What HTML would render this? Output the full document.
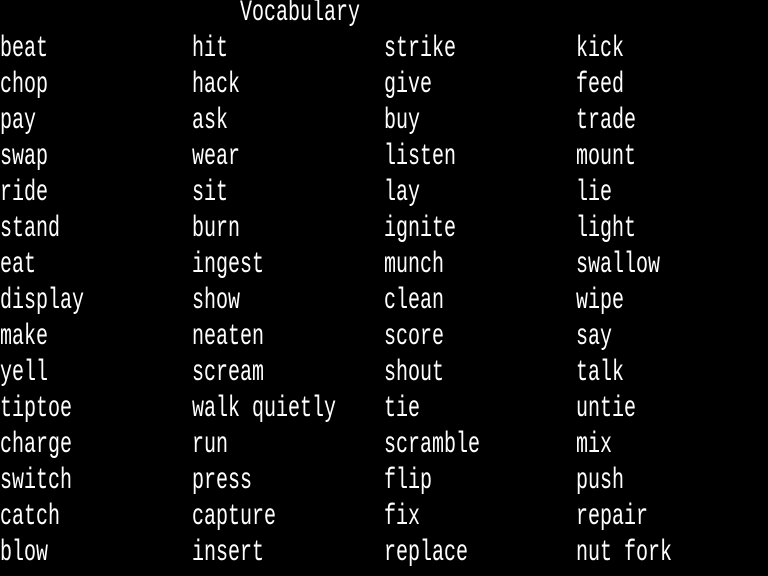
<!DOCTYPE html>
<html><head><style>
html,body{margin:0;padding:0;background:#000;width:768px;height:576px;overflow:hidden}
.w{position:absolute;color:#fff;font-family:"Liberation Mono",monospace;font-size:30px;line-height:36px;white-space:pre;transform:scaleX(0.6667);transform-origin:0 0;}
</style></head><body>
<div class="w" style="left:240px;top:-5px">Vocabulary</div>
<div id="c"></div>
<div class="w" style="left:0;top:31px">beat</div><div class="w" style="left:192px;top:31px">hit</div><div class="w" style="left:384px;top:31px">strike</div><div class="w" style="left:576px;top:31px">kick</div>
<div class="w" style="left:0;top:67px">chop</div><div class="w" style="left:192px;top:67px">hack</div><div class="w" style="left:384px;top:67px">give</div><div class="w" style="left:576px;top:67px">feed</div>
<div class="w" style="left:0;top:103px">pay</div><div class="w" style="left:192px;top:103px">ask</div><div class="w" style="left:384px;top:103px">buy</div><div class="w" style="left:576px;top:103px">trade</div>
<div class="w" style="left:0;top:139px">swap</div><div class="w" style="left:192px;top:139px">wear</div><div class="w" style="left:384px;top:139px">listen</div><div class="w" style="left:576px;top:139px">mount</div>
<div class="w" style="left:0;top:175px">ride</div><div class="w" style="left:192px;top:175px">sit</div><div class="w" style="left:384px;top:175px">lay</div><div class="w" style="left:576px;top:175px">lie</div>
<div class="w" style="left:0;top:211px">stand</div><div class="w" style="left:192px;top:211px">burn</div><div class="w" style="left:384px;top:211px">ignite</div><div class="w" style="left:576px;top:211px">light</div>
<div class="w" style="left:0;top:247px">eat</div><div class="w" style="left:192px;top:247px">ingest</div><div class="w" style="left:384px;top:247px">munch</div><div class="w" style="left:576px;top:247px">swallow</div>
<div class="w" style="left:0;top:283px">display</div><div class="w" style="left:192px;top:283px">show</div><div class="w" style="left:384px;top:283px">clean</div><div class="w" style="left:576px;top:283px">wipe</div>
<div class="w" style="left:0;top:319px">make</div><div class="w" style="left:192px;top:319px">neaten</div><div class="w" style="left:384px;top:319px">score</div><div class="w" style="left:576px;top:319px">say</div>
<div class="w" style="left:0;top:355px">yell</div><div class="w" style="left:192px;top:355px">scream</div><div class="w" style="left:384px;top:355px">shout</div><div class="w" style="left:576px;top:355px">talk</div>
<div class="w" style="left:0;top:391px">tiptoe</div><div class="w" style="left:192px;top:391px">walk quietly</div><div class="w" style="left:384px;top:391px">tie</div><div class="w" style="left:576px;top:391px">untie</div>
<div class="w" style="left:0;top:427px">charge</div><div class="w" style="left:192px;top:427px">run</div><div class="w" style="left:384px;top:427px">scramble</div><div class="w" style="left:576px;top:427px">mix</div>
<div class="w" style="left:0;top:463px">switch</div><div class="w" style="left:192px;top:463px">press</div><div class="w" style="left:384px;top:463px">flip</div><div class="w" style="left:576px;top:463px">push</div>
<div class="w" style="left:0;top:499px">catch</div><div class="w" style="left:192px;top:499px">capture</div><div class="w" style="left:384px;top:499px">fix</div><div class="w" style="left:576px;top:499px">repair</div>
<div class="w" style="left:0;top:535px">blow</div><div class="w" style="left:192px;top:535px">insert</div><div class="w" style="left:384px;top:535px">replace</div><div class="w" style="left:576px;top:535px">nut fork</div>
</body></html>
